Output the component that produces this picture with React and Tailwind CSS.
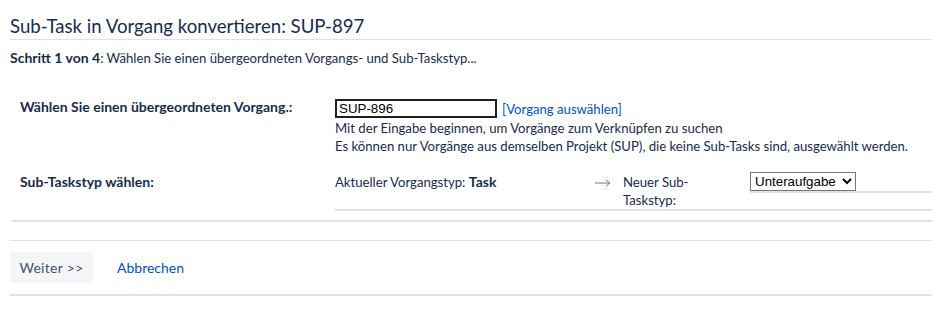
import React from "react";

const Arrow = () => (
  <svg width="16" height="8" viewBox="0 0 16 8" className="mt-[6px]">
    <path d="M0 4h15M11 1l4 3-4 3" fill="none" stroke="#6b778c" strokeWidth="1" />
  </svg>
);

const App = () => {
  return (
    <div className="min-h-[312px] bg-white font-['Lato','Liberation_Sans',sans-serif] text-[13.15px] text-[#172b4d]">
      <div className="px-[10px]">
        <h2 className="pt-[13px] text-[18.6px] leading-[26px] border-b border-[#dfe1e6]">
          Sub-Task in Vorgang konvertieren: SUP-897
        </h2>
        <p className="mt-[9px] leading-[18px]">
          <b className="text-[14px]">Schritt 1 von 4</b>: Wählen Sie einen übergeordneten Vorgangs- und Sub-Taskstyp...
        </p>

        <div className="mt-[31px] ml-[2px] pb-[9px] border-b-2 border-[#dfe1e6]">
          {/* parent issue */}
          <div className="flex items-start">
            <div className="w-[323px] pl-[8px] font-bold text-[14px] leading-[18px]">
              Wählen Sie einen übergeordneten Vorgang.:
            </div>
            <div className="flex-1">
              <div className="flex items-center gap-[5px] mt-[1px]">
                <input
                  type="text"
                  defaultValue="SUP-896"
                  className="w-[162px] h-[19px] border-2 border-[#1f1f1f] px-[2px] font-['Liberation_Sans'] text-[13.33px] text-black outline-none"
                />
                <a href="#" className="text-[#0052cc] leading-[18px]">
                  [Vorgang auswählen]
                </a>
              </div>
              <div className="mt-[1px] leading-[18px] whitespace-nowrap">
                Mit der Eingabe beginnen, um Vorgänge zum Verknüpfen zu suchen
                <br />
                Es können nur Vorgänge aus demselben Projekt (SUP), die keine Sub-Tasks sind, ausgewählt werden.
              </div>
            </div>
          </div>

          {/* sub-task type */}
          <div className="flex items-start mt-[17px]">
            <div className="w-[323px] pl-[8px] pt-[1px] font-bold text-[14px] leading-[18px]">
              Sub-Taskstyp wählen:
            </div>
            <div className="flex-1 flex items-start border-b-2 border-[#dfe1e6] leading-[18px]">
              <div className="w-[260px] pt-[1px]">
                Aktueller Vorgangstyp: <b className="text-[14px]">Task</b>
              </div>
              <div className="w-[28px] pt-[1px]">
                <Arrow />
              </div>
              <div className="w-[127px] pt-[1px]">
                <div className="w-[90px]">Neuer Sub-Taskstyp:</div>
              </div>
              <div className="flex-1 border-b-2 border-[#dfe1e6]">
                <select
                  defaultValue="Unteraufgabe"
                  className="w-[106px] h-[19px] border border-[#767676] bg-white font-['Liberation_Sans'] text-[13.33px] text-black"
                >
                  <option>Unteraufgabe</option>
                </select>
              </div>
            </div>
          </div>
        </div>

        <div className="mt-[18px] border-t border-[#dfe1e6] pt-[11px] pb-[11px] border-b-2 border-b-[#dfe1e6] flex items-center gap-[24px]">
          <button className="h-[31px] w-[83px] rounded-[3px] bg-[#f4f5f7] text-[#42526e] text-[14px] tracking-[0.3px]">
            Weiter &gt;&gt;
          </button>
          <a href="#" className="text-[#0052cc] text-[14px]">
            Abbrechen
          </a>
        </div>
      </div>
    </div>
  );
};

export default App;
